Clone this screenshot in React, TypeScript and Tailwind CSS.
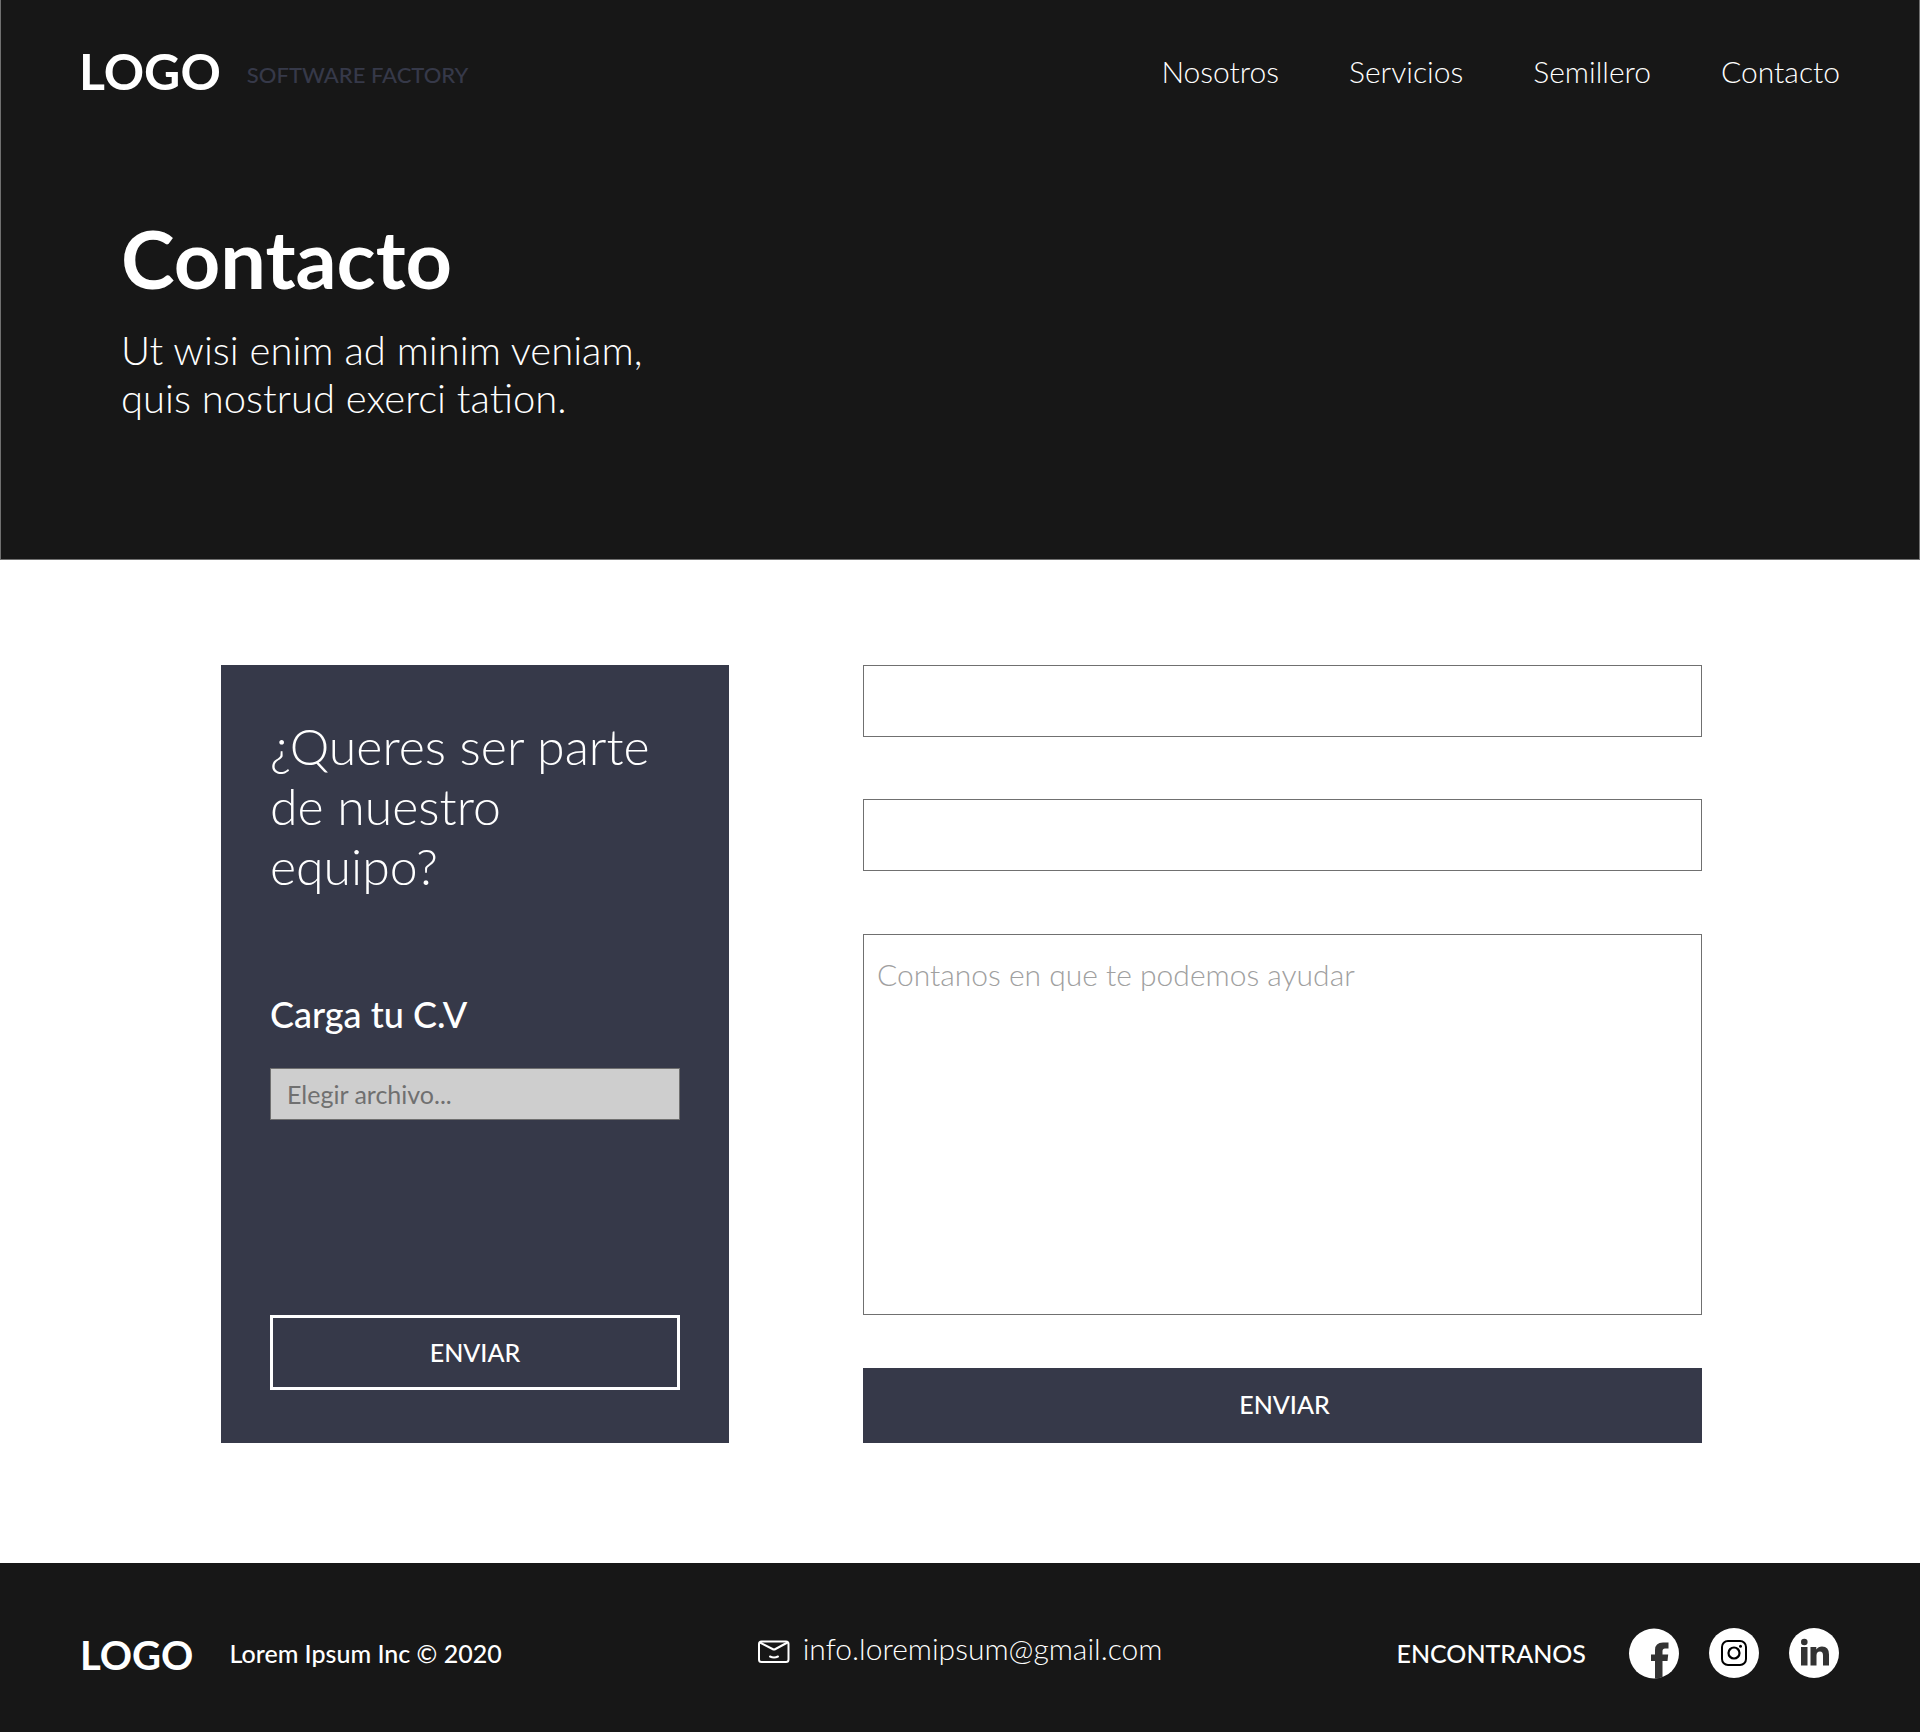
const links = ["Nosotros", "Servicios", "Semillero", "Contacto"];

function MailIcon() {
  return (
    <svg width="32" height="24" viewBox="0 0 32 24" fill="none" stroke="#fff" strokeWidth="2" aria-hidden="true">
      <rect x="1" y="1.500" width="29.500" height="20.500" rx="2.500" />
      <path d="M2 2.500 L14.500 9 Q16 9.800 17.500 9 L29.500 2.500" />
      <path d="M12 16.500 Q16 18.500 20 16.500" strokeLinecap="round" />
    </svg>
  );
}

function FacebookIcon() {
  return (
    <svg width="50" height="51" viewBox="0 0 50 51" aria-hidden="true">
      <circle cx="25" cy="25.500" r="25" fill="#fff" />
      <path d="M26 50.500 V33 H22 V26.500 H26 V22 Q26 14.500 34 14.500 H39.500 V20.500 H36 Q33.500 20.500 33.500 23 V26.500 H39.200 L38.500 33 H33.500 V49 Q30 50.500 26 50.500 Z" fill="#333" />
    </svg>
  );
}

function InstagramIcon() {
  return (
    <svg width="50" height="51" viewBox="0 0 50 51" fill="none" aria-hidden="true">
      <circle cx="25" cy="25" r="25" fill="#fff" />
      <rect x="13" y="13" width="24" height="24" rx="6" stroke="#000" strokeWidth="2" />
      <circle cx="25" cy="25" r="5.500" stroke="#000" strokeWidth="2.200" />
      <circle cx="31.500" cy="18.300" r="1.500" fill="#000" />
    </svg>
  );
}

function LinkedinIcon() {
  return (
    <svg width="50" height="51" viewBox="0 0 50 51" aria-hidden="true">
      <circle cx="25" cy="25" r="25" fill="#fff" />
      <g fill="#333">
        <circle cx="15.300" cy="14" r="3.300" />
        <path d="M12 19 H18.500 V37.500 H12 Z" />
        <path d="M21.500 19 H27.300 V21.500 Q29.300 18.500 33 18.500 Q40 18.500 40 26.500 V37.500 H34 V27.500 Q34 23.500 31 23.500 Q27.500 23.500 27.500 27.500 V37.500 H21.500 Z" />
      </g>
    </svg>
  );
}

const socials = [
  { name: "Facebook", icon: <FacebookIcon /> },
  { name: "Instagram", icon: <InstagramIcon /> },
  { name: "LinkedIn", icon: <LinkedinIcon /> },
];

export default function App() {
  return (
    <div className="min-h-screen bg-white font-['Lato',sans-serif] text-white">
      <header className="border-x border-b border-[#707070] bg-[#171717] pb-[137px]">
        <div className="flex items-center justify-between pt-[41px] pr-[79px] pl-[78px]">
          <a href="#" className="flex items-center gap-[26px]">
            <span className="text-[50px] leading-[60px] font-bold">LOGO</span>
            <span className="pt-2 text-[22px] leading-[28px] font-medium text-[#363949]">SOFTWARE FACTORY</span>
          </a>
          <nav className="flex gap-[70px] text-3xl font-light">
            {links.map((link) => (
              <a key={link} href="#">{link}</a>
            ))}
          </nav>
        </div>
        <div className="px-[120px] pt-[109px]">
          <h1 className="text-[81px] leading-[96px] font-bold">Contacto</h1>
          <p className="mt-5 text-[40px] leading-[48px] font-light">
            Ut wisi enim ad minim veniam,
            <br />
            quis nostrud exerci tation.
          </p>
        </div>
      </header>

      <main className="flex items-stretch gap-[134px] pt-[105px] pr-[218px] pb-[120px] pl-[221px]">
        <form className="flex w-[508px] shrink-0 flex-col bg-[#363949] px-[49px] pt-[51px] pb-[53px]">
          <h2 className="text-[50px] leading-[60px] font-light">¿Queres ser parte de nuestro equipo?</h2>
          <label htmlFor="cv" className="mt-24 text-4xl leading-[44px] font-medium">Carga tu C.V</label>
          <input
            id="cv"
            type="text"
            placeholder="Elegir archivo..."
            className="mt-8 h-[52px] border border-[#707070] bg-[#cecece] px-4 text-[25px] text-[#707070] placeholder:text-[#707070]"
          />
          <button type="button" className="mt-auto h-[75px] border-[3px] border-white text-[25px] font-medium">ENVIAR</button>
        </form>

        <form className="flex min-w-0 flex-1 flex-col">
          <input aria-label="Nombre" type="text" className="h-[72px] border border-[#707070] px-4 text-3xl text-[#707070]" />
          <input aria-label="Email" type="email" className="mt-[62px] h-[72px] border border-[#707070] px-4 text-3xl text-[#707070]" />
          <textarea
            aria-label="Mensaje"
            placeholder="Contanos en que te podemos ayudar"
            className="mt-[63px] h-[381px] resize-none border border-[#707070] px-[13px] py-[21px] text-3xl font-light text-[#707070] placeholder:text-[#a0a0a0]"
          />
          <button type="button" className="mt-[53px] h-[75px] bg-[#363949] pb-0.5 pl-1 text-[25px] font-medium">ENVIAR</button>
        </form>
      </main>

      <footer className="flex h-[169px] items-center justify-between bg-[#171717] pt-3 pr-[81px] pl-20">
        <div className="flex items-center gap-9">
          <span className="pt-0.5 text-[40px] leading-[48px] font-bold">LOGO</span>
          <span className="pb-0.5 text-[25px] leading-[30px] font-medium">Lorem Ipsum Inc © 2020</span>
        </div>
        <a href="#" className="ml-[22px] flex items-center gap-[13px] pb-1 text-3xl font-light">
          <MailIcon />
          <span className="pb-2">info.loremipsum@gmail.com</span>
        </a>
        <div className="flex items-center gap-[30px]">
          <span className="mr-[13px] pb-0.5 text-[25px] leading-[30px] font-medium">ENCONTRANOS</span>
          {socials.map((social) => (
            <a key={social.name} href="#" aria-label={social.name}>{social.icon}</a>
          ))}
        </div>
      </footer>
    </div>
  );
}
